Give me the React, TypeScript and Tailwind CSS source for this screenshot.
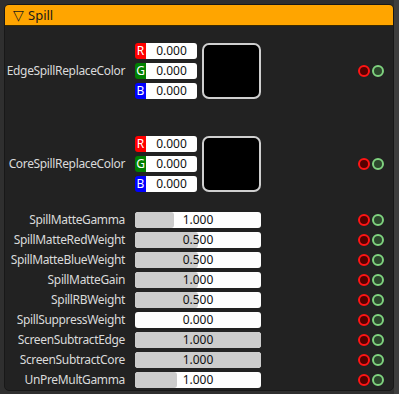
import React from "react";

type Slider = { label: string; value: string; fill: number };

const sliders: Slider[] = [
  { label: "SpillMatteGamma", value: "1.000", fill: 0.31 },
  { label: "SpillMatteRedWeight", value: "0.500", fill: 0.5 },
  { label: "SpillMatteBlueWeight", value: "0.500", fill: 0.5 },
  { label: "SpillMatteGain", value: "1.000", fill: 0.5 },
  { label: "SpillRBWeight", value: "0.500", fill: 0.5 },
  { label: "SpillSuppressWeight", value: "0.000", fill: 0 },
  { label: "ScreenSubtractEdge", value: "1.000", fill: 1 },
  { label: "ScreenSubtractCore", value: "1.000", fill: 1 },
  { label: "UnPreMultGamma", value: "1.000", fill: 0.33 },
];

function Pins() {
  return (
    <div className="ml-auto mr-[9px] flex items-center gap-[2px]">
      <div className="h-[12px] w-[12px] rounded-full border-2 border-[#ff1414] bg-[#560000]" />
      <div className="h-[12px] w-[12px] rounded-full border-2 border-[#7fd27f] bg-[#2c472c]" />
    </div>
  );
}

function Label({ text }: { text: string }) {
  return (
    <div className="w-[120px] shrink-0 text-right text-[12px] leading-none tracking-[-0.35px] text-[#dadada]">
      {text}
    </div>
  );
}

function Channel({ letter, bg }: { letter: string; bg: string }) {
  return (
    <div className="flex h-[16px]">
      <div className={`flex w-[11px] items-center justify-center rounded-l-[3px] text-[12px] leading-none text-white ${bg}`}>
        {letter}
      </div>
      <div className="flex w-[51px] items-center justify-center rounded-r-[3px] bg-white text-[12px] leading-none text-[#111]">
        0.000
      </div>
    </div>
  );
}

function ColorRow({ label, className }: { label: string; className: string }) {
  return (
    <div className={`flex items-center ${className}`}>
      <Label text={label} />
      <div className="ml-[10px] flex items-center">
        <div className="flex flex-col gap-[4px]">
          <Channel letter="R" bg="bg-[#ff0000]" />
          <Channel letter="G" bg="bg-[#008000]" />
          <Channel letter="B" bg="bg-[#0000ff]" />
        </div>
        <div className="ml-[5px] h-[56px] w-[59px] rounded-[7px] border-2 border-[#cfcfcf] bg-black" />
      </div>
      <Pins />
    </div>
  );
}

function SliderRow({ s }: { s: Slider }) {
  return (
    <div className="flex h-[16px] items-center">
      <Label text={s.label} />
      <div className="relative ml-[10px] flex h-[16px] w-[126px] items-center justify-center overflow-hidden rounded-[3px] bg-white">
        <div className="absolute inset-y-0 left-0 rounded-[3px] bg-[#cccccc]" style={{ width: `${s.fill * 100}%` }} />
        <span className="relative text-[12px] leading-none text-[#111]">{s.value}</span>
      </div>
      <Pins />
    </div>
  );
}

export default function App() {
  return (
    <div
      className="flex h-[394px] w-[399px] overflow-hidden bg-[#2f2f2f]"
      style={{ fontFamily: '"Noto Sans", "Open Sans", sans-serif' }}
    >
      <div className="ml-[4px] mt-[4px] flex h-[387px] w-[390px] flex-col overflow-hidden rounded-[5px] border border-[#181818] bg-[#222222]">
        {/* Header */}
        <div className="flex h-[21px] shrink-0 items-center gap-[4px] border-b border-[#3a2a00] bg-[#ffa500] pl-[8px] text-[13px] leading-none text-[#1a1a1a]">
          <span className="text-[14px]">▽</span>
          <span>Spill</span>
        </div>

        <ColorRow label="EdgeSpillReplaceColor" className="mt-[17px]" />
        <ColorRow label="CoreSpillReplaceColor" className="mt-[37px]" />

        <div className="mt-[20px] flex flex-col gap-[4px]">
          {sliders.map((s) => (
            <SliderRow key={s.label} s={s} />
          ))}
        </div>
      </div>
      <div className="ml-auto h-full w-[5px] bg-[#3e3e3e]" />
    </div>
  );
}
